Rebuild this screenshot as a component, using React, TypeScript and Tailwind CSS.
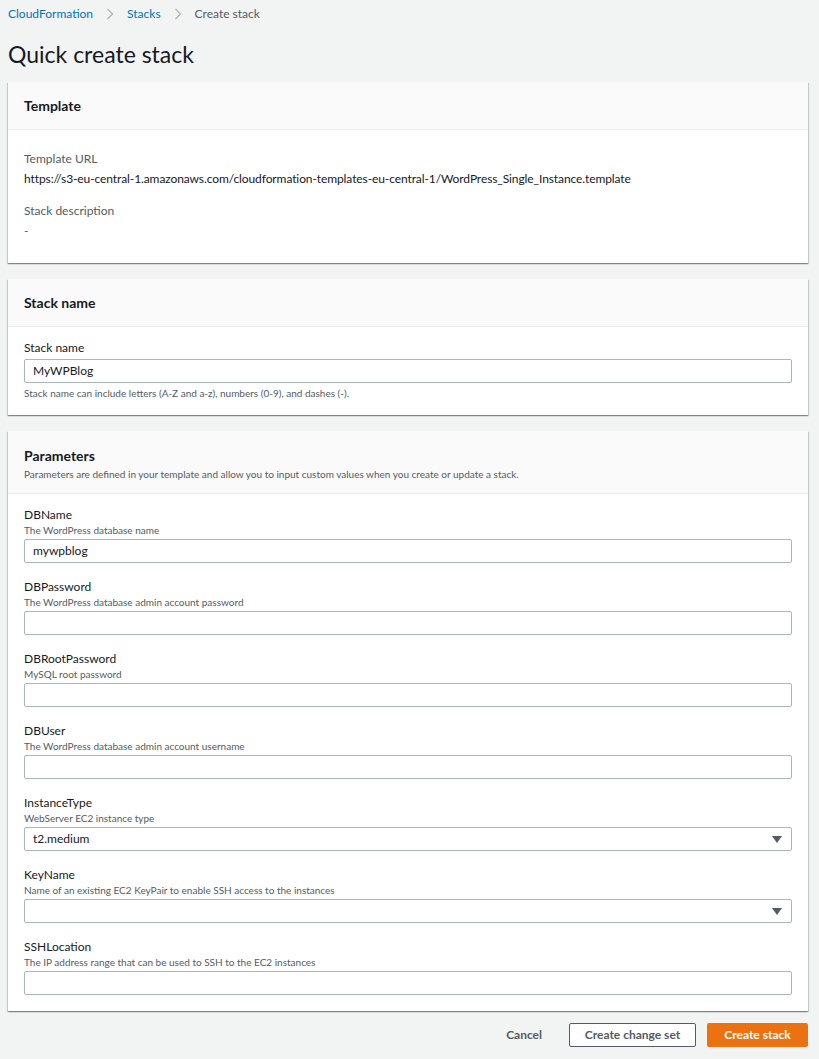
import React from 'react';

const fields = [
  { name: 'DBName', desc: 'The WordPress database name', value: 'mywpblog', select: false },
  { name: 'DBPassword', desc: 'The WordPress database admin account password', value: '', select: false },
  { name: 'DBRootPassword', desc: 'MySQL root password', value: '', select: false },
  { name: 'DBUser', desc: 'The WordPress database admin account username', value: '', select: false },
  { name: 'InstanceType', desc: 'WebServer EC2 instance type', value: 't2.medium', select: true },
  { name: 'KeyName', desc: 'Name of an existing EC2 KeyPair to enable SSH access to the instances', value: '', select: true },
  { name: 'SSHLocation', desc: 'The IP address range that can be used to SSH to the EC2 instances', value: '', select: false },
];

function Chevron() {
  return (
    <svg width="8" height="12" viewBox="0 0 8 12" className="mx-[13px]">
      <path d="M1.5 1l5 5-5 5" fill="none" stroke="#aab7b8" strokeWidth="1.3" />
    </svg>
  );
}

function Panel({ title, desc, children }: { title: string; desc?: string; children: React.ReactNode }) {
  return (
    <section className="bg-white shadow-[0_1px_1px_0_rgba(0,28,36,0.3),1px_1px_1px_0_rgba(0,28,36,0.15),-1px_1px_1px_0_rgba(0,28,36,0.15)]">
      <div className={`bg-[#fafafa] border-b border-[#eaeded] px-4 ${desc ? 'pt-[15px] pb-[12px]' : 'h-12 flex items-center pt-[1px]'}`}>
        <h2 className="text-[14px] font-bold text-[#16191f] leading-[20px]">{title}</h2>
        {desc && <p className="text-[10px] text-[#545b64] leading-[14px] mt-[1px]">{desc}</p>}
      </div>
      {children}
    </section>
  );
}

function Input({ value, select }: { value: string; select?: boolean }) {
  return (
    <div className="h-6 border border-[#aab7b8] rounded-[2px] bg-white flex items-center justify-between pl-2 pr-[9px] text-[12px] text-[#16191f]">
      <span>{value}</span>
      {select && (
        <svg width="10" height="7" viewBox="0 0 10 7">
          <path d="M0 0h10L5 7z" fill="#545b64" />
        </svg>
      )}
    </div>
  );
}

export default function App() {
  return (
    <div className="min-h-[1059px] bg-[#f2f3f3] text-[#16191f]" style={{ fontFamily: 'Lato, "Open Sans", "Liberation Sans", Arial, sans-serif' }}>
      <div className="w-[800px] ml-2">
        <nav className="flex items-center h-[28px] text-[12px]">
          <a className="text-[#0073bb]">CloudFormation</a>
          <Chevron />
          <a className="text-[#0073bb]">Stacks</a>
          <Chevron />
          <span className="text-[#545b64]">Create stack</span>
        </nav>
        <h1 className="text-[23px] leading-[30px] mt-[11px] mb-[13px]">Quick create stack</h1>

        <div className="flex flex-col gap-4">
          <Panel title="Template">
            <div className="px-4 pt-[19px] pb-[22px] text-[12px] leading-[20px]">
              <div className="text-[#545b64]">Template URL</div>
              <div className="tracking-[-0.1px]">https://s3-eu-central-1.amazonaws.com/cloudformation-templates-eu-central-1/WordPress_Single_Instance.template</div>
              <div className="text-[#545b64] mt-3">Stack description</div>
              <div className="text-[#545b64]">-</div>
            </div>
          </Panel>

          <Panel title="Stack name">
            <div className="px-4 pt-[11px] pb-[15px]">
              <div className="text-[12px] leading-[20px] mb-[1px]">Stack name</div>
              <Input value="MyWPBlog" />
              <div className="text-[10px] text-[#545b64] leading-[14px] mt-[3px]">
                Stack name can include letters (A-Z and a-z), numbers (0-9), and dashes (-).
              </div>
            </div>
          </Panel>

          <Panel title="Parameters" desc="Parameters are defined in your template and allow you to input custom values when you create or update a stack.">
            <div className="px-4 pt-[13px] pb-4 flex flex-col gap-4">
              {fields.map((f) => (
                <div key={f.name}>
                  <div className="text-[12px] leading-[16px]">{f.name}</div>
                  <div className="text-[10px] text-[#545b64] leading-[12px] mt-[1px] mb-[3px]">{f.desc}</div>
                  <Input value={f.value} select={f.select} />
                </div>
              ))}
            </div>
          </Panel>
        </div>

        <div className="flex justify-end items-center mt-[12px] gap-[11px] text-[12px] font-bold">
          <button className="text-[#545b64] px-4 h-6">Cancel</button>
          <button className="h-6 w-[127px] border border-[#545b64] rounded-[2px] bg-white text-[#545b64]">Create change set</button>
          <button className="h-6 w-[101px] rounded-[2px] bg-[#ec7211] text-white">Create stack</button>
        </div>
      </div>
    </div>
  );
}
